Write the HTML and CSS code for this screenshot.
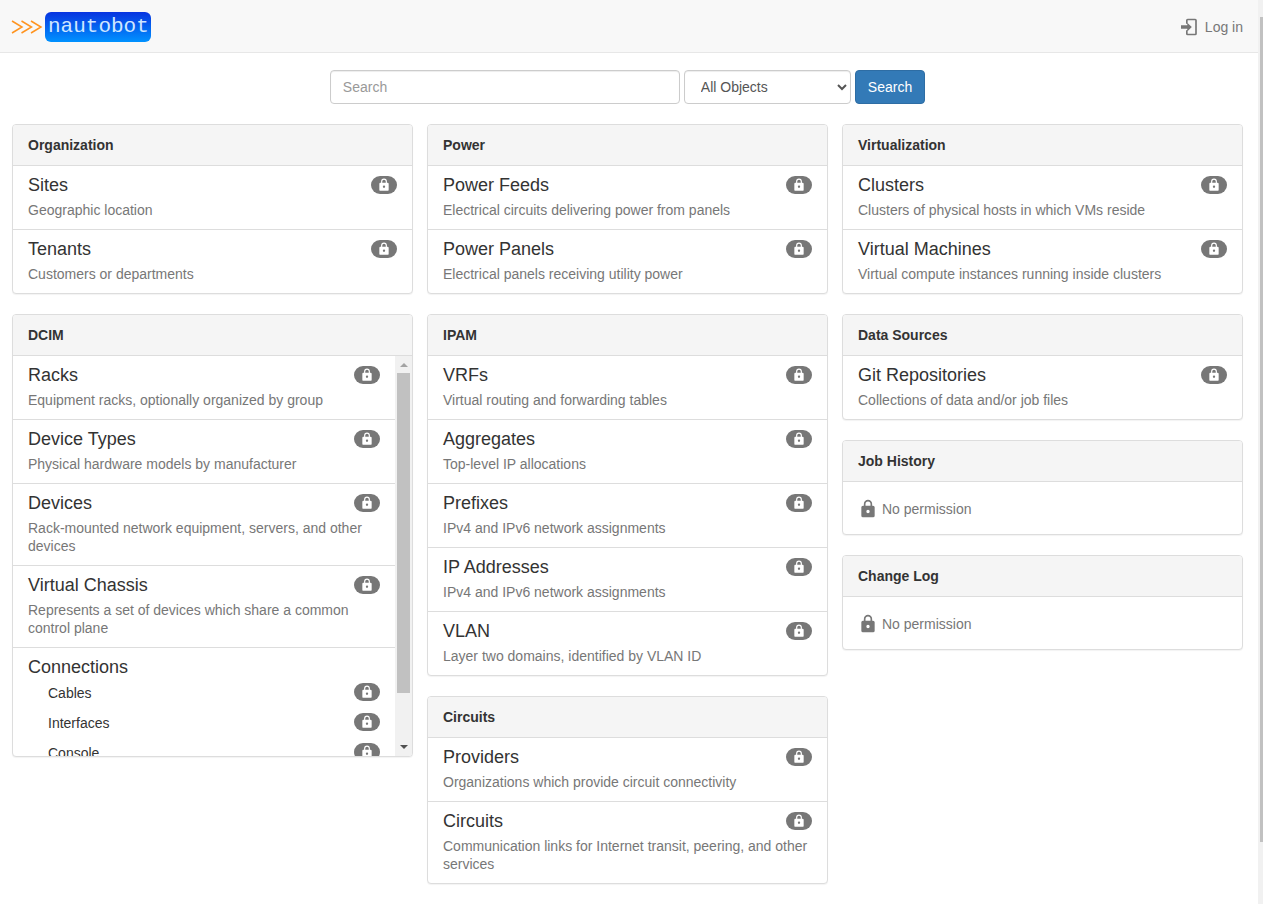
FILE: index.html
```html
<!DOCTYPE html>
<html lang="en">
<head>
	<meta charset="UTF-8">
	<title>Home - Nautobot</title>
	<link rel="stylesheet" href="styles.css">
</head>
<body>
<svg class="sprite" aria-hidden="true">
	<symbol id="lock" viewBox="0 0 24 24">
		<path d="M12,17A2,2 0 0,0 14,15C14,13.89 13.1,13 12,13A2,2 0 0,0 10,15A2,2 0 0,0 12,17M18,8A2,2 0 0,1 20,10V20A2,2 0 0,1 18,22H6A2,2 0 0,1 4,20V10C4,8.89 4.9,8 6,8H7V6A5,5 0 0,1 12,1A5,5 0 0,1 17,6V8H18M12,3A3,3 0 0,0 9,6V8H15V6A3,3 0 0,0 12,3Z"/>
	</symbol>
</svg>
<div class="page">
	<nav class="navbar">
		<a class="brand" href="#">
			<svg class="chevrons" viewBox="0 0 32 14"><path d="M1,1L11,7L1,13M10.500,1L20.500,7L10.500,13M20,1L30,7L20,13"/></svg>
			<span class="brand-name">nautobot</span>
		</a>
		<a class="login" href="#">
			<svg viewBox="0 0 24 24"><path d="M8,2H17A2,2 0 0,1 19,4V20A2,2 0 0,1 17,22H8A2,2 0 0,1 6,20V16H8V20H17V4H8V8H6V4A2,2 0 0,1 8,2M0,10H7.500V6.750L13,12L7.500,17.250V14H0Z"/></svg>
			Log in
		</a>
	</nav>
	<form class="search">
		<input class="field query" type="text" placeholder="Search" aria-label="Search">
		<select class="field objects" aria-label="Object type">
			<option>All Objects</option>
		</select>
		<button class="btn" type="submit">Search</button>
	</form>
	<div class="columns">
		<div class="column">
			<section class="panel">
				<h2>Organization</h2>
				<ul class="list">
					<li><h4>Sites <span class="badge"><svg><use href="#lock"/></svg></span></h4><p>Geographic location</p></li>
					<li><h4>Tenants <span class="badge"><svg><use href="#lock"/></svg></span></h4><p>Customers or departments</p></li>
				</ul>
			</section>
			<section class="panel">
				<h2>DCIM</h2>
				<div class="scroll">
					<ul class="list">
						<li><h4>Racks <span class="badge"><svg><use href="#lock"/></svg></span></h4><p>Equipment racks, optionally organized by group</p></li>
						<li><h4>Device Types <span class="badge"><svg><use href="#lock"/></svg></span></h4><p>Physical hardware models by manufacturer</p></li>
						<li><h4>Devices <span class="badge"><svg><use href="#lock"/></svg></span></h4><p>Rack-mounted network equipment, servers, and other devices</p></li>
						<li><h4>Virtual Chassis <span class="badge"><svg><use href="#lock"/></svg></span></h4><p>Represents a set of devices which share a common control plane</p></li>
						<li>
							<h4>Connections</h4>
							<div class="subs">
								<div class="sub">Cables <span class="badge"><svg><use href="#lock"/></svg></span></div>
								<div class="sub">Interfaces <span class="badge"><svg><use href="#lock"/></svg></span></div>
								<div class="sub">Console <span class="badge"><svg><use href="#lock"/></svg></span></div>
							</div>
						</li>
					</ul>
					<div class="bar">
						<span class="arrow up"></span>
						<span class="thumb"></span>
						<span class="arrow down"></span>
					</div>
				</div>
			</section>
		</div>
		<div class="column">
			<section class="panel">
				<h2>Power</h2>
				<ul class="list">
					<li><h4>Power Feeds <span class="badge"><svg><use href="#lock"/></svg></span></h4><p>Electrical circuits delivering power from panels</p></li>
					<li><h4>Power Panels <span class="badge"><svg><use href="#lock"/></svg></span></h4><p>Electrical panels receiving utility power</p></li>
				</ul>
			</section>
			<section class="panel">
				<h2>IPAM</h2>
				<ul class="list">
					<li><h4>VRFs <span class="badge"><svg><use href="#lock"/></svg></span></h4><p>Virtual routing and forwarding tables</p></li>
					<li><h4>Aggregates <span class="badge"><svg><use href="#lock"/></svg></span></h4><p>Top-level IP allocations</p></li>
					<li><h4>Prefixes <span class="badge"><svg><use href="#lock"/></svg></span></h4><p>IPv4 and IPv6 network assignments</p></li>
					<li><h4>IP Addresses <span class="badge"><svg><use href="#lock"/></svg></span></h4><p>IPv4 and IPv6 network assignments</p></li>
					<li><h4>VLAN <span class="badge"><svg><use href="#lock"/></svg></span></h4><p>Layer two domains, identified by VLAN ID</p></li>
				</ul>
			</section>
			<section class="panel">
				<h2>Circuits</h2>
				<ul class="list">
					<li><h4>Providers <span class="badge"><svg><use href="#lock"/></svg></span></h4><p>Organizations which provide circuit connectivity</p></li>
					<li><h4>Circuits <span class="badge"><svg><use href="#lock"/></svg></span></h4><p>Communication links for Internet transit, peering, and other services</p></li>
				</ul>
			</section>
		</div>
		<div class="column">
			<section class="panel">
				<h2>Virtualization</h2>
				<ul class="list">
					<li><h4>Clusters <span class="badge"><svg><use href="#lock"/></svg></span></h4><p>Clusters of physical hosts in which VMs reside</p></li>
					<li><h4>Virtual Machines <span class="badge"><svg><use href="#lock"/></svg></span></h4><p>Virtual compute instances running inside clusters</p></li>
				</ul>
			</section>
			<section class="panel">
				<h2>Data Sources</h2>
				<ul class="list">
					<li><h4>Git Repositories <span class="badge"><svg><use href="#lock"/></svg></span></h4><p>Collections of data and/or job files</p></li>
				</ul>
			</section>
			<section class="panel">
				<h2>Job History</h2>
				<div class="denied"><svg><use href="#lock"/></svg>No permission</div>
			</section>
			<section class="panel">
				<h2>Change Log</h2>
				<div class="denied"><svg><use href="#lock"/></svg>No permission</div>
			</section>
		</div>
	</div>
</div>
<div class="page-bar"><span class="page-thumb"></span></div>
</body>
</html>
```
FILE: styles.css
```css
*{box-sizing:border-box;}
body{margin:0;display:flex;min-height:100vh;background:#fff;color:#333;font:14px/20px "Liberation Sans",Arial,sans-serif;}
h2,h4,p,ul{margin:0;padding:0;}
ul{list-style:none;}
a{text-decoration:none;}
.sprite{position:absolute;width:0;height:0;}
.page{flex:1;min-width:0;}

/* top bar */
.navbar{display:flex;justify-content:space-between;align-items:center;height:53px;padding:2px 15px 0 11px;background:#f8f8f8;border-bottom:1px solid #e7e7e7;}
.brand{display:flex;align-items:center;gap:2px;}
.chevrons{width:32px;height:14px;fill:none;stroke:#ff9420;stroke-width:1.5;}
.brand-name{height:30px;padding:0 2px 0 3px;border-radius:6px;background:linear-gradient(#0834e0,#0092ff);color:#cfe6ff;font:21px/30px "Liberation Mono","Courier New",monospace;}
.login{display:flex;align-items:center;gap:4px;color:#777;}
.login svg{width:20px;height:20px;fill:#777;}

/* search form */
.search{display:flex;justify-content:center;gap:4px;margin:17px 15px 20px 12px;}
.field{height:34px;padding:6px 12px;border:1px solid #ccc;border-radius:4px;background:#fff;color:#555;font:inherit;box-shadow:inset 0 1px 1px rgba(0,0,0,0.075);}
.field::placeholder{color:#999;}
.query{width:350px;}
.objects{width:167px;padding:6px 0 6px 12px;}
.btn{height:34px;padding:0 12px;border:1px solid #2e6da4;border-radius:4px;background:#337ab7;color:#fff;font:inherit;}

/* panels */
.columns{display:grid;grid-template-columns:repeat(3,minmax(0,1fr));gap:14px;padding:0 15px 20px 12px;}
.column{display:flex;flex-direction:column;gap:20px;}
.panel{border:1px solid #ddd;border-radius:4px;background:#fff;box-shadow:0 1px 1px rgba(0,0,0,0.05);overflow:hidden;}
.panel h2{padding:10px 15px;background:#f5f5f5;border-bottom:1px solid #ddd;font-size:14px;line-height:20px;}
.list{flex:1;}
.list li{padding:9px 15px 10px;border-bottom:1px solid #ddd;}
.list li:last-child{border-bottom:0;}
.list h4{display:flex;justify-content:space-between;align-items:center;font-size:18px;font-weight:normal;line-height:20px;}
.list p{margin-top:6px;color:#777;line-height:18px;}
.badge{display:flex;justify-content:center;align-items:center;width:26px;height:18px;border-radius:10px;background:#777;}
.badge svg{width:14px;height:14px;fill:#fff;}
.subs{display:flex;flex-direction:column;gap:10px;padding:6px 0 0 20px;}
.sub{display:flex;justify-content:space-between;align-items:flex-start;}
.denied{display:flex;align-items:center;gap:4px;padding:17px 15px 15px;color:#777;}
.denied svg{width:20px;height:20px;fill:#777;}

/* scroll bars */
.scroll{display:flex;height:400px;overflow:hidden;}
.bar{display:flex;flex-direction:column;align-items:center;width:17px;height:400px;padding:7px 0;background:#f1f1f1;}
.thumb{width:13px;height:320px;margin:6px 0 auto;background:#c1c1c1;}
.arrow{border:4px solid transparent;}
.up{border-top:0;border-bottom-color:#a3a3a3;}
.down{border-bottom:0;border-top-color:#505050;}
.page-bar{width:5px;padding:17px 0 62px 2px;background:#f1f1f1;}
.page-thumb{display:block;height:100%;background:#c1c1c1;}
```
